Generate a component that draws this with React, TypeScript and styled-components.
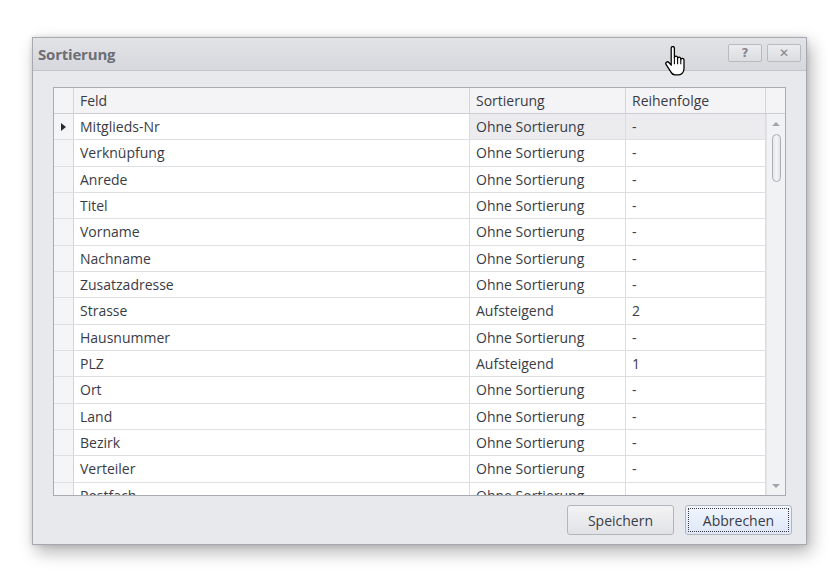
import styled, { createGlobalStyle } from "styled-components";

const GlobalStyle = createGlobalStyle`
  html, body {
    margin: 0;
    padding: 0;
    background: #ffffff;
  }
  body {
    font-family: "Open Sans", "Noto Sans", "DejaVu Sans", sans-serif;
    color: #3c3d47;
  }
`;

const Page = styled.div`
  position: relative;
  width: 839px;
  height: 579px;
  padding: 37px 0 0 32px;
  box-sizing: border-box;
  overflow: hidden;
`;

const Dialog = styled.div`
  width: 775px;
  height: 508px;
  box-sizing: border-box;
  border: 1px solid #a7a9b1;
  background: #e8e9ed;
  box-shadow: 4px 7px 16px rgba(0, 0, 0, 0.3), 0 0 5px rgba(0, 0, 0, 0.12);
  display: flex;
  flex-direction: column;
`;

const TitleBar = styled.div`
  height: 32px;
  flex-shrink: 0;
  display: flex;
  align-items: center;
  padding: 0 5px 0 5px;
  background: linear-gradient(#e2e3e7, #d7d8dd);
  border-bottom: 1px solid #c3c4ca;
`;

const Title = styled.div`
  flex: 1;
  font-size: 15px;
  font-weight: 700;
  color: #6d6e76;
  letter-spacing: -0.2px;
  margin-top: -1px;
`;

const CaptionButton = styled.div`
  width: 34px;
  height: 18px;
  margin-left: 5px;
  margin-top: -2px;
  box-sizing: border-box;
  border: 1px solid #b9bac0;
  border-radius: 2px;
  background: linear-gradient(#ebecef, #dcdde1);
  display: flex;
  align-items: center;
  justify-content: center;
  font-family: "DejaVu Sans", sans-serif;
  font-size: 12px;
  font-weight: 700;
  color: #85868d;
`;

const Body = styled.div`
  flex: 1;
  display: flex;
  flex-direction: column;
  padding: 16px 0 0 20px;
`;

const Grid = styled.div`
  width: 733px;
  height: 409px;
  box-sizing: border-box;
  border: 1px solid #a9abb2;
  background: #ffffff;
  display: flex;
  flex-direction: column;
  overflow: hidden;
`;

const COLS = "20px 396px 156px 140px 19px";

const HeaderRow = styled.div`
  display: grid;
  grid-template-columns: ${COLS};
  height: 26px;
  flex-shrink: 0;
  background: #f4f4f6;
  border-bottom: 1px solid #cdced4;
  box-sizing: border-box;
`;

const HeaderCell = styled.div`
  border-right: 1px solid #d3d4d9;
  padding-left: 6px;
  font-size: 14px;
  line-height: 25px;
  color: #3a3b45;
  white-space: nowrap;
  &:last-child {
    border-right: none;
  }
`;

const GridBody = styled.div`
  flex: 1;
  display: flex;
  min-height: 0;
`;

const Rows = styled.div`
  width: 712px;
  overflow: hidden;
`;

const Row = styled.div`
  display: grid;
  grid-template-columns: 20px 396px 156px 140px;
  height: 26.35px;
  box-sizing: border-box;
  border-bottom: 1px solid #dedfe3;
`;

const Indicator = styled.div`
  background: #f5f5f7;
  border-right: 1px solid #d3d4d9;
  display: flex;
  align-items: center;
  justify-content: center;
`;

const Cell = styled.div<{ $selected?: boolean }>`
  background: ${(p) => (p.$selected ? "#ececef" : "#ffffff")};
  border-right: 1px solid #dcdde1;
  padding-left: 6px;
  font-size: 14px;
  line-height: 25px;
  color: #3a3b45;
  white-space: nowrap;
  overflow: hidden;
`;

const Scrollbar = styled.div`
  width: 19px;
  background: #f1f2f4;
  border-left: 1px solid #e2e3e6;
  box-sizing: border-box;
  display: flex;
  flex-direction: column;
  align-items: center;
  padding: 8px 0 7px;
`;

const Arrow = styled.div<{ $down?: boolean }>`
  width: 0;
  height: 0;
  border-left: 4px solid transparent;
  border-right: 4px solid transparent;
  ${(p) =>
    p.$down
      ? "border-top: 4px solid #a4a5ab; margin-top: auto;"
      : "border-bottom: 4px solid #a4a5ab;"}
`;

const Thumb = styled.div`
  width: 9px;
  height: 48px;
  margin-top: 8px;
  box-sizing: border-box;
  border: 1px solid #acaeb5;
  border-radius: 5px;
  background: linear-gradient(90deg, #e6e7ea, #f4f4f6, #e3e4e7);
`;

const ButtonRow = styled.div`
  display: flex;
  justify-content: flex-end;
  gap: 11px;
  padding: 9px 14px 0 0;
`;

const Button = styled.div<{ $focused?: boolean }>`
  width: 107px;
  height: 30px;
  box-sizing: border-box;
  border: 1px solid #b3b5bc;
  border-radius: 3px;
  background: ${(p) =>
    p.$focused
      ? "linear-gradient(#f1f5fd, #dfe8f8)"
      : "linear-gradient(#f3f3f5, #e1e2e6)"};
  display: flex;
  align-items: center;
  justify-content: center;
  font-size: 14px;
  color: #3a3b45;
  position: relative;
  ${(p) =>
    p.$focused &&
    `&::after {
      content: "";
      position: absolute;
      inset: 2px;
      border: 1px dotted #3c3d47;
    }`}
`;

const Cursor = styled.svg`
  position: absolute;
  left: 664px;
  top: 46px;
`;

type Entry = { field: string; sort: string; order: string };

const entries: Entry[] = [
  { field: "Mitglieds-Nr", sort: "Ohne Sortierung", order: "-" },
  { field: "Verknüpfung", sort: "Ohne Sortierung", order: "-" },
  { field: "Anrede", sort: "Ohne Sortierung", order: "-" },
  { field: "Titel", sort: "Ohne Sortierung", order: "-" },
  { field: "Vorname", sort: "Ohne Sortierung", order: "-" },
  { field: "Nachname", sort: "Ohne Sortierung", order: "-" },
  { field: "Zusatzadresse", sort: "Ohne Sortierung", order: "-" },
  { field: "Strasse", sort: "Aufsteigend", order: "2" },
  { field: "Hausnummer", sort: "Ohne Sortierung", order: "-" },
  { field: "PLZ", sort: "Aufsteigend", order: "1" },
  { field: "Ort", sort: "Ohne Sortierung", order: "-" },
  { field: "Land", sort: "Ohne Sortierung", order: "-" },
  { field: "Bezirk", sort: "Ohne Sortierung", order: "-" },
  { field: "Verteiler", sort: "Ohne Sortierung", order: "-" },
  { field: "Postfach", sort: "Ohne Sortierung", order: "-" },
];

const App = () => {
  return (
    <Page>
      <GlobalStyle />
      <Dialog>
        <TitleBar>
          <Title>Sortierung</Title>
          <CaptionButton>?</CaptionButton>
          <CaptionButton>✕</CaptionButton>
        </TitleBar>
        <Body>
          <Grid>
            <HeaderRow>
              <HeaderCell />
              <HeaderCell>Feld</HeaderCell>
              <HeaderCell>Sortierung</HeaderCell>
              <HeaderCell>Reihenfolge</HeaderCell>
              <HeaderCell />
            </HeaderRow>
            <GridBody>
              <Rows>
                {entries.map((e, index) => (
                  <Row key={e.field}>
                    <Indicator>
                      {index === 0 && (
                        <svg width="5" height="8" viewBox="0 0 5 8">
                          <path d="M0 0 L5 4 L0 8 Z" fill="#2b2c33" />
                        </svg>
                      )}
                    </Indicator>
                    <Cell>{e.field}</Cell>
                    <Cell $selected={index === 0}>{e.sort}</Cell>
                    <Cell $selected={index === 0}>{e.order}</Cell>
                  </Row>
                ))}
              </Rows>
              <Scrollbar>
                <Arrow />
                <Thumb />
                <Arrow $down />
              </Scrollbar>
            </GridBody>
          </Grid>
          <ButtonRow>
            <Button>Speichern</Button>
            <Button $focused>Abbrechen</Button>
          </ButtonRow>
        </Body>
      </Dialog>
      <Cursor width="24" height="32" viewBox="0 0 22 30">
        <path
          d="M6.5 2 a1.5 1.5 0 0 1 3 0 V11 a1.5 1.5 0 0 1 3 0 V12 a1.5 1.5 0 0 1 3 0 V13 a1.5 1.5 0 0 1 3 0 V21 c0 3 -2 6 -5 6 H10 c-2 0 -3 -1 -4 -3 L1.8 17.5 a1.5 1.5 0 0 1 2.5 -2 L6.5 18 Z"
          fill="#ffffff"
          stroke="#000000"
          strokeWidth="1.2"
          strokeLinejoin="round"
        />
        <path d="M9.5 11 V17 M12.5 12 V17 M15.5 13 V17" stroke="#000000" strokeWidth="1" fill="none" />
      </Cursor>
    </Page>
  );
};

export default App;
